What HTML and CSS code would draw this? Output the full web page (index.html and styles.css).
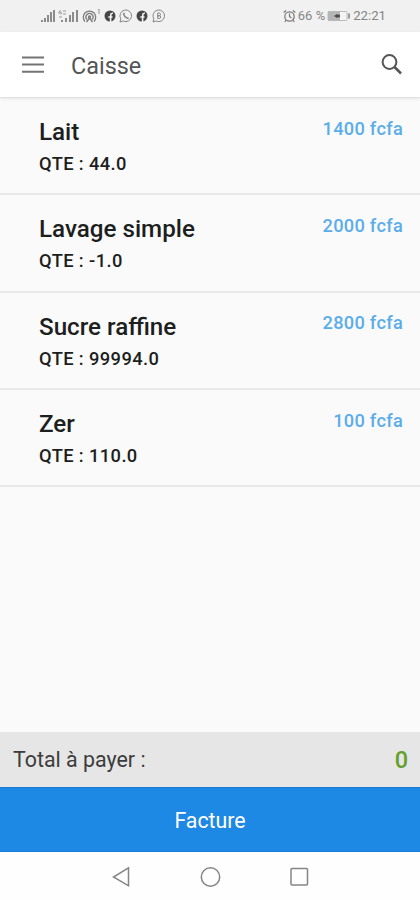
FILE: index.html
```
<!DOCTYPE html>
<html lang="fr">
<head>
<meta charset="utf-8">
<title>Caisse</title>
<link rel="stylesheet" href="styles.css">
</head>
<body>
<div class="screen">
  <div class="status">
    <svg class="signals" width="38" height="14" viewBox="0 0 38 14">
      <g fill="#8b8b8b"><path d="M0 11h2v2H0zM3 9h2v4H3zM6 6h2v7H6zM9 3h2v10H9zM12 1h2v12h-2z"/><path d="M20 11h2v2h-2zM24 9h2v4h-2zM28 6h2v7h-2zM31 3h2v10h-2zM35 1h2v12h-2z"/></g>
      <path d="M19.500 1l-2 3h3M20 2.500v3M22 2h3M22 5h3M18 8h3" fill="none" stroke="#999"/>
    </svg>
    <svg class="hotspot" width="20" height="17" viewBox="0 0 20 17" fill="none" stroke="#7c7c7c" stroke-width="1.300">
      <path d="M3 13.500A6.200 6.200 0 1 1 12 13.500M5 11.500a3.500 3.500 0 1 1 5 0"/><circle cx="7.500" cy="9" r="1"/><path d="M7.500 10l-3 4M7.500 10l3 4"/><path d="M16 2l1-1v5" stroke="#999" stroke-width="1"/>
    </svg>
    <svg class="facebook" width="12" height="12" viewBox="0 0 12 12"><circle cx="6" cy="6" r="5.500" fill="#474747"/><path d="M6.600 12V7H8.500M4.300 7h2.500V5q0-2 2.200-1.700" fill="none" stroke="#f1f1f1" stroke-width="1.600"/></svg>
    <svg class="whatsapp" width="14" height="14" viewBox="0 0 14 14" fill="none" stroke="#858585"><path d="M1 13l.8-3.200A5.800 5.800 0 1 1 4.200 12z"/><path d="M4.500 4.300q.3 4 5 5.200M4.500 4l1 1.500M8 9l1.700.5" stroke-width="1.500"/></svg>
    <svg class="facebook" width="12" height="12" viewBox="0 0 12 12"><circle cx="6" cy="6" r="5.500" fill="#474747"/><path d="M6.600 12V7H8.500M4.300 7h2.500V5q0-2 2.200-1.700" fill="none" stroke="#f1f1f1" stroke-width="1.600"/></svg>
    <svg class="business" width="14" height="14" viewBox="0 0 14 14" fill="none" stroke="#858585"><path d="M1 13l.8-3.200A5.800 5.800 0 1 1 4.200 12z"/><path d="M5.700 4h1.500q1.300 0 1.300 1.400T7.200 6.800H5.700zM5.700 6.800h1.700q1.300 0 1.300 1.300T7.400 9.500H5.700z"/></svg>
    <div class="status-right">
      <svg width="13" height="14" viewBox="0 0 13 14" fill="none" stroke="#777" stroke-width="1.200"><circle cx="6.500" cy="7.500" r="4.700"/><path d="M6.500 4.500v3l2 1.500M.7 3.500l2.500-2M12.300 3.500l-2.500-2M3.200 11l-1.500 2M9.800 11l1.500 2"/></svg>
      <span class="percent">66 %</span>
      <svg class="battery" width="24" height="12" viewBox="0 0 24 12"><rect x="1" y="1.500" width="19" height="9" rx="1" fill="#f5f5f5" stroke="#bbb"/><path d="M1 1.500h12v9H1z" fill="#b5b5b5"/><path d="M7 6l3-2 1 .8h2v2.400h-2l-1 .8z" fill="#4c4c4c"/><path d="M21 3.500h2v5h-2z" fill="#999"/></svg>
      <span class="clock">22:21</span>
    </div>
  </div>
  <header class="appbar">
    <svg width="22" height="18" viewBox="0 0 22 18" stroke="#747474" stroke-width="2"><path d="M0 1.500h22M0 8.600h22M0 15.700h22"/></svg>
    <h1>Caisse</h1>
    <svg class="search" width="24" height="24" viewBox="0 0 24 24" fill="none" stroke="#555"><circle cx="9.500" cy="9" r="6.900" stroke-width="2"/><path d="M14.500 14l6.500 6.500" stroke-width="2.500"/></svg>
  </header>
  <main class="list">
    <div class="item"><div><h2>Lait</h2><p>QTE : 44.0</p></div><span class="price">1400 fcfa</span></div>
    <div class="item"><div><h2>Lavage simple</h2><p>QTE : -1.0</p></div><span class="price">2000 fcfa</span></div>
    <div class="item"><div><h2>Sucre raffine</h2><p>QTE : 99994.0</p></div><span class="price">2800 fcfa</span></div>
    <div class="item"><div><h2>Zer</h2><p>QTE : 110.0</p></div><span class="price">100 fcfa</span></div>
  </main>
  <div class="total"><span>Total à payer :</span><b>0</b></div>
  <button class="invoice">Facture</button>
  <nav class="nav">
    <svg width="20" height="22" viewBox="0 0 20 22"><path d="M17.500 1.800v18L2.500 11z"/></svg>
    <svg width="22" height="22" viewBox="0 0 22 22"><circle cx="11.500" cy="11" r="9.200"/></svg>
    <svg width="20" height="22" viewBox="0 0 20 22"><rect x="2" y="2.500" width="16.500" height="16.500" rx="1"/></svg>
  </nav>
</div>
</body>
</html>
```
FILE: styles.css
```
* { box-sizing: border-box; margin: 0; }
body { font-family: Roboto, "Noto Sans", sans-serif; background: #fafafa; color: #1c1e20; }
svg { display: block; flex: none; }
.screen { width: 420px; height: 900px; display: flex; flex-direction: column; overflow: hidden; }
.status { height: 32px; background: #f1f1f1; display: flex; align-items: center; padding: 0 34px 0 41px; flex: none; }
.hotspot { margin-left: 3px; }
.facebook { margin-left: 2px; }
.whatsapp { margin-left: 3px; }
.whatsapp + .facebook { margin-left: 3px; }
.business { margin-left: 4px; }
.status-right { margin-left: auto; display: flex; align-items: center; color: #858585; font-size: 13px; line-height: 16px; white-space: nowrap; }
.percent { margin-left: 2px; }
.battery { margin: 0 2px; }
.clock { font-size: 13.200px; }
.appbar { height: 66px; flex: none; background: #fff; display: flex; align-items: center; padding: 0 16px 0 22px; border-bottom: 1px solid #e2e2e2; box-shadow: 0 1px 3px rgba(0,0,0,.08); z-index: 1; }
.appbar h1 { font-size: 23.400px; font-weight: 400; color: #555; margin-left: 27px; line-height: 28px; padding-top: 2px; }
.search { margin-left: auto; }
.list { flex: 1; }
.item { height: 97.300px; border-bottom: 2px solid #e8e8e8; display: flex; justify-content: space-between; padding: 19.400px 17px 0 39px; }
.item h2 { font-size: 24.200px; font-weight: 500; line-height: 30px; }
.item h2 { margin-top: -.400px; }
.item p { font-size: 18.300px; font-weight: 500; letter-spacing: .4px; line-height: 22px; margin-top: 6px; }
.price { font-size: 18.200px; font-weight: 500; letter-spacing: .3px; line-height: 22px; padding-top: .300px; color: #5badea; }
.total { height: 55px; flex: none; background: #e6e6e6; display: flex; justify-content: space-between; align-items: center; padding: 0 12px 0 13px; font-size: 21.400px; color: #3c3c3c; }
.total b { font-weight: 500; font-size: 23.500px; color: #64a02b; }
.invoice { height: 65px; flex: none; border: 0; border-top: 1px solid #1a79d0; border-bottom: 1px solid #1a7ddd; background: #1e88e5; color: #fff; font: 400 21.300px Roboto, sans-serif; padding: 1px 0 0; }
.nav { height: 48px; flex: none; background: #fefefe; display: flex; align-items: center; justify-content: center; gap: 68px; padding-top: 1px; }
.nav svg { fill: none; stroke: #858585; stroke-width: 1.500; }
```
